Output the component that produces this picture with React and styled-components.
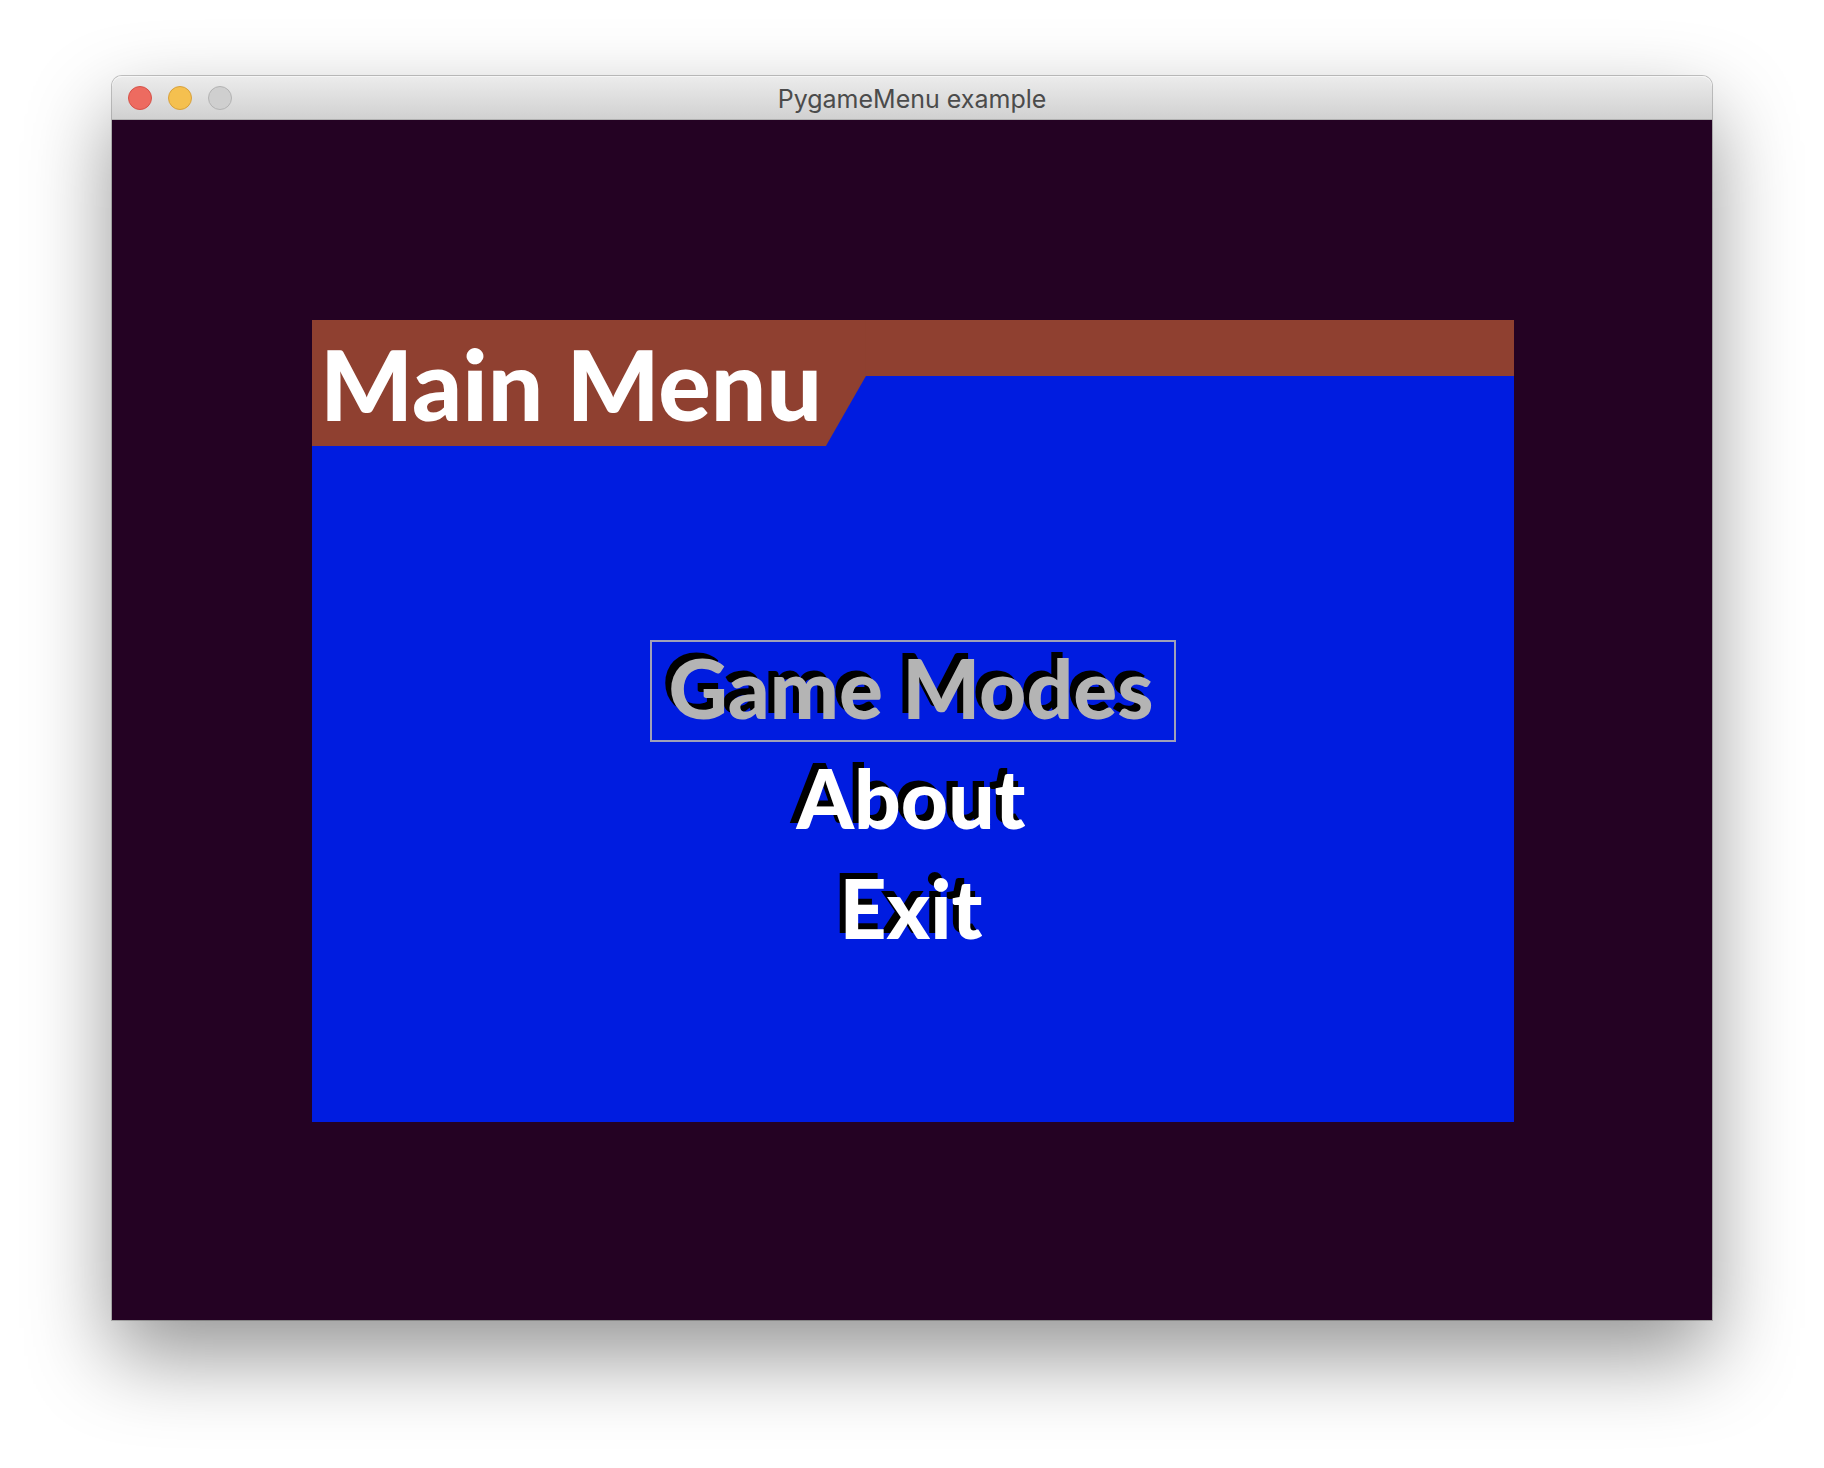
import React, { useState } from "react";
import styled, { createGlobalStyle } from "styled-components";

const GlobalStyle = createGlobalStyle`
  *, *::before, *::after { box-sizing: border-box; }
  body { margin: 0; background: #fff; }
`;

const Desktop = styled.div`
  min-height: 100vh;
  padding: 76px 112px 148px;
  display: flex;
  flex-direction: column;
`;

const Window = styled.main`
  flex: 1;
  display: flex;
  flex-direction: column;
  border-radius: 10px 10px 0 0;
  box-shadow: 0 0 0 1px rgba(0, 0, 0, 0.22), 0 36px 84px rgba(0, 0, 0, 0.42);
`;

const TitleBar = styled.header`
  height: 44px;
  padding: 0 16px;
  display: grid;
  grid-template-columns: 1fr auto 1fr;
  align-items: center;
  border-radius: 10px 10px 0 0;
  border-bottom: 1px solid #b1b1b1;
  background: linear-gradient(#ececec, #d1d1d1);
  box-shadow: inset 0 1px 0 #f6f6f6;
`;

const WindowControls = styled.div`
  display: flex;
  gap: 16px;
`;

const ControlButton = styled.button`
  width: 24px;
  height: 24px;
  padding: 0;
  border: 1px solid ${(p) => p.$edge};
  border-radius: 50%;
  background: ${(p) => p.$fill};
`;

const WindowTitle = styled.span`
  padding-top: 2px;
  font: 400 25px/32px Inter, "Liberation Sans", sans-serif;
  color: #4b4b4b;
`;

const Screen = styled.div`
  flex: 1;
  padding: 200px 198px 198px 200px;
  display: flex;
  background: #240223;
`;

const Panel = styled.section`
  flex: 1;
  display: flex;
  flex-direction: column;
  background: #001ce0;
`;

const PanelHeader = styled.div`
  display: flex;
  align-items: flex-start;
`;

const PanelTitle = styled.h1`
  margin: 0;
  height: 126px;
  padding: 0 44px 0 8px;
  font: 900 98px/126px Lato, "Open Sans", sans-serif;
  white-space: nowrap;
  color: #fff;
  background: #8f4030;
  clip-path: polygon(0 0, 100% 0, 100% 56px, calc(100% - 40px) 100%, 0 100%);
`;

const HeaderStrip = styled.div`
  flex: 1;
  height: 56px;
  margin-left: -2px;
  background: #8f4030;
`;

const Menu = styled.nav`
  flex: 1;
  padding-top: 34px;
  display: flex;
  flex-direction: column;
  align-items: center;
  justify-content: center;
  gap: 8px;
`;

const MenuButton = styled.button`
  height: 102px;
  padding: 0 20px 8px 16px;
  border: 2px solid ${(p) => (p.$selected ? "#a0a0b8" : "transparent")};
  background: none;
  font: 900 82px/90px Lato, "Open Sans", sans-serif;
  color: ${(p) => (p.$selected ? "#b4b4b4" : "#fff")};
  text-shadow: -6px -6px 0 #000;
  outline: none;
`;

const controls = [
  { label: "Close", fill: "#ed6b60", edge: "#d65249" },
  { label: "Minimize", fill: "#f5c04f", edge: "#d8a13c" },
  { label: "Zoom", fill: "#cfcfcf", edge: "#b3b3b3" },
];

const items = ["Game Modes", "About", "Exit"];

export default function App() {
  const [selected, setSelected] = useState(0);

  return (
    <Desktop>
      <GlobalStyle />
      <Window>
        <TitleBar>
          <WindowControls>
            {controls.map((c) => (
              <ControlButton key={c.label} aria-label={c.label} $fill={c.fill} $edge={c.edge} />
            ))}
          </WindowControls>
          <WindowTitle>PygameMenu example</WindowTitle>
        </TitleBar>
        <Screen>
          <Panel>
            <PanelHeader>
              <PanelTitle>Main Menu</PanelTitle>
              <HeaderStrip />
            </PanelHeader>
            <Menu>
              {items.map((item, i) => (
                <MenuButton key={item} $selected={i === selected} onClick={() => setSelected(i)}>
                  {item}
                </MenuButton>
              ))}
            </Menu>
          </Panel>
        </Screen>
      </Window>
    </Desktop>
  );
}
